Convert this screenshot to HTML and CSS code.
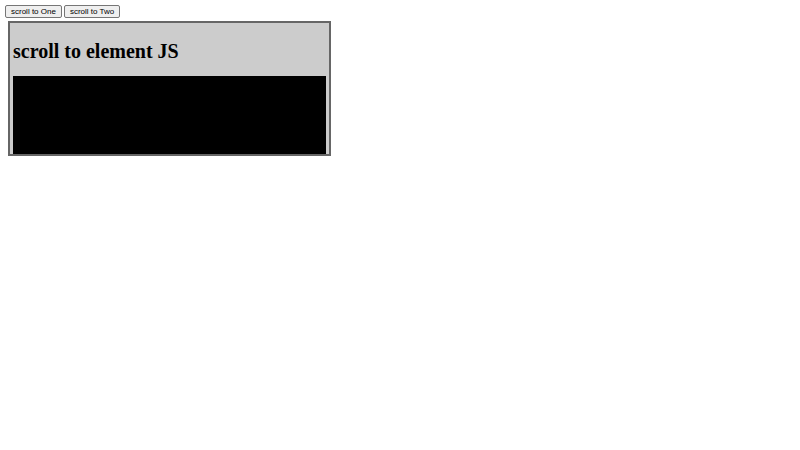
FILE: index.html
```html
<!DOCTYPE html>
<html lang="en">
<head>
  <meta charset="utf-8">
  <title>scroll to element JS</title>
  <link rel="stylesheet" href="styles.css">
</head>
<body>
  <div class="controls">
    <button type="button">scroll to One</button>
    <button type="button">scroll to Two</button>
  </div>
  <main class="panel">
    <h1 class="title">scroll to element JS</h1>
    <div class="block"></div>
  </main>
</body>
</html>
```

FILE: styles.css
```css
* {
  box-sizing: border-box;
}

body {
  margin: 5px;
  background: #fff;
  color: #000;
  font-family: "Liberation Serif", serif;
}

.controls {
  display: flex;
  gap: 2px;
}

button {
  padding: 0 5px;
  border: 1px solid #767676;
  border-radius: 2px;
  background: #efefef;
  color: #000;
  font: 8px/11px "Liberation Sans", sans-serif;
}

.panel {
  max-width: 323px;
  margin: 3px;
  padding: 0 3px;
  overflow: hidden;
  border: 2px solid #666;
  background: #ccc;
}

.title {
  margin: 17px 0 13px;
  font-size: 20px;
  line-height: 23px;
}

.block {
  height: 78px;
  background: #000;
}
```
